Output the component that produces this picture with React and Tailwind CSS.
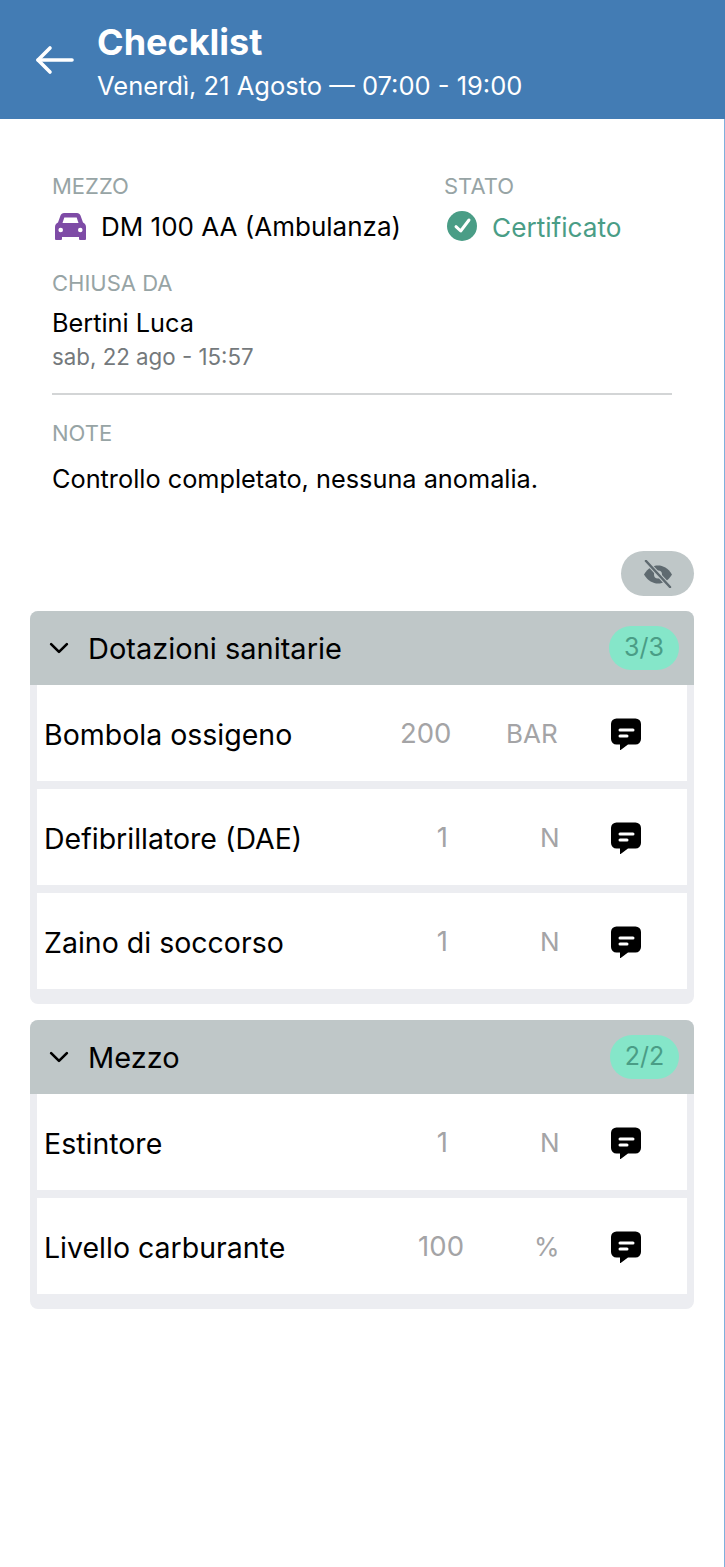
import { IoChevronDown } from 'react-icons/io5';

const sections = [
  {
    title: 'Dotazioni sanitarie',
    count: '3/3',
    badge: 'w-[70px]',
    items: [
      { name: 'Bombola ossigeno', value: '200', unit: 'BAR', valueClass: 'w-[50px] ml-auto mr-[56px]', unitClass: 'w-[52px]' },
      { name: 'Defibrillatore (DAE)', value: '1', unit: 'N', valueClass: 'w-[14px] ml-auto mr-[92px]', unitClass: 'w-[18px]' },
      { name: 'Zaino di soccorso', value: '1', unit: 'N', valueClass: 'w-[14px] ml-auto mr-[92px]', unitClass: 'w-[18px]' }
    ]
  },
  {
    title: 'Mezzo',
    count: '2/2',
    badge: 'w-[69px]',
    items: [
      { name: 'Estintore', value: '1', unit: 'N', valueClass: 'w-[14px] ml-auto mr-[92px]', unitClass: 'w-[18px]' },
      { name: 'Livello carburante', value: '100', unit: '%', valueClass: 'w-[50px] ml-auto mr-[70px]', unitClass: 'w-[24px]' }
    ]
  }
];

function BackArrow() {
  return (
    <svg width="40" height="30" viewBox="0 0 40 30" className="shrink-0" fill="none" stroke="#fff" strokeWidth="3.6" strokeLinecap="round" strokeLinejoin="round">
      <path d="M3 15h34" />
      <path d="M15 3 3 15l12 12" />
    </svg>
  );
}

function CarIcon() {
  return (
    <svg width="31" height="27" viewBox="0 0 31 27" className="shrink-0 ml-[3px]">
      <path d="M9 0h13c1.600 0 2.900.9 3.500 2.400L28 9.500c1.800.9 3 2.500 3 4.500v12a1 1 0 0 1-1 1h-5a1 1 0 0 1-1-1v-2H7v2a1 1 0 0 1-1 1H1a1 1 0 0 1-1-1V14c0-2 1.200-3.600 3-4.500l2.500-7.100C6.100.9 7.400 0 9 0z" fill="#7e4ba6" />
      <path d="M9.300 4.500h12.400l1.800 5.500H7.500z" fill="#fff" />
      <circle cx="5.700" cy="17" r="2.300" fill="#fff" />
      <circle cx="25.300" cy="17" r="2.300" fill="#fff" />
    </svg>
  );
}

function CheckIcon() {
  return (
    <svg width="30" height="30" viewBox="0 0 30 30" className="shrink-0 ml-[3px]">
      <circle cx="15" cy="15" r="15" fill="#4a9d86" />
      <path d="M9 15.700l4.700 4.300L22 9" fill="none" stroke="#fff" strokeWidth="3" strokeLinecap="round" strokeLinejoin="round" />
    </svg>
  );
}

function EyeOffIcon() {
  return (
    <svg width="28" height="28" viewBox="0 0 28 28">
      <path d="M0 14.500C4 8 9 5.500 14 5.500S24 8 28 14.500C24 21 19 23.500 14 23.500S4 21 0 14.500z" fill="#5f6a70" />
      <circle cx="14" cy="14.500" r="4" fill="#bfc7c8" />
      <path d="M2 1l24 26" stroke="#bfc7c8" strokeWidth="4.500" />
      <path d="M2 1l24 26" stroke="#5f6a70" strokeWidth="2.500" strokeLinecap="round" />
    </svg>
  );
}

function NoteIcon() {
  return (
    <svg width="32" height="33" viewBox="0 0 32 33" className="shrink-0">
      <path d="M6.500 1.500h19A5.500 5.500 0 0 1 31 7v15a5.500 5.500 0 0 1-5.500 5.500H18L10 33.500v-6H6.500A5.500 5.500 0 0 1 1 22V7a5.500 5.500 0 0 1 5.500-5.500z" fill="#000" />
      <rect x="8.500" y="11.500" width="16" height="3" rx="1.500" fill="#fff" />
      <rect x="8.500" y="17.500" width="10" height="3" rx="1.500" fill="#fff" />
    </svg>
  );
}

function Row({ item }) {
  return (
    <div className="flex items-center h-[96px] bg-white pl-[7px] pr-[45px]">
      <span className="text-[28.5px] pt-[4px] text-black whitespace-nowrap">{item.name}</span>
      <span className={`text-[27.5px] pt-[2px] text-[#a4a4a6] text-right shrink-0 ${item.valueClass}`}>{item.value}</span>
      <span className={`text-[26px] text-[#a4a4a6] shrink-0 mr-[52px] ${item.unitClass}`}>{item.unit}</span>
      <NoteIcon />
    </div>
  );
}

function Section({ section }) {
  return (
    <div className="rounded-lg bg-[#ecedf1] overflow-hidden pb-[15px]">
      <div className="flex items-center h-[74px] bg-[#bfc7c8] pl-[15px] pr-[15px]">
        <IoChevronDown className="text-[28px] text-black shrink-0" />
        <span className="ml-[15px] pt-px text-[29px] text-black">{section.title}</span>
        <span className={`ml-auto flex items-center justify-center h-[44px] rounded-full bg-[#85e6c9] text-[25px] text-[#4a9d86] ${section.badge}`}>
          {section.count}
        </span>
      </div>
      <div className="flex flex-col gap-2 px-[7px]">
        {section.items.map((item) => (
          <Row key={item.name} item={item} />
        ))}
      </div>
    </div>
  );
}

export default function App() {
  return (
    <div className="min-h-[1567px] bg-white border-r border-[#7fb0dc] font-['Inter',sans-serif] text-black">
      <div className="flex items-center h-[119px] bg-[#437cb4] pl-[35px] -mr-px">
        <BackArrow />
        <div className="ml-[22px] pt-[2px]">
          <div className="text-[36px] leading-[44px] font-bold text-white">Checklist</div>
          <div className="text-[25.5px] leading-[32px] text-white mt-[6px]">Venerdì, 21 Agosto — 07:00 - 19:00</div>
        </div>
      </div>

      <div className="px-[52px] pt-[55px]">
        <div className="flex">
          <div className="w-[392px]">
            <div className="text-[22px] leading-[24px] text-[#97a4a5]">MEZZO</div>
            <div className="flex items-center mt-[10px] h-[36px]">
              <CarIcon />
              <span className="ml-[15px] text-[26px] text-black whitespace-nowrap">DM 100 AA (Ambulanza)</span>
            </div>
          </div>
          <div>
            <div className="text-[22px] leading-[24px] text-[#97a4a5]">STATO</div>
            <div className="flex items-center mt-[10px] h-[36px]">
              <CheckIcon />
              <span className="ml-[15px] pt-[3px] text-[26.2px] text-[#4a9d86]">Certificato</span>
            </div>
          </div>
        </div>

        <div className="mt-[27px] text-[22px] leading-[24px] text-[#97a4a5]">CHIUSA DA</div>
        <div className="mt-[12px] text-[25.3px] leading-[32px] text-black">Bertini Luca</div>
        <div className="mt-[4px] text-[22.3px] leading-[28px] text-[#74797c]">sab, 22 ago - 15:57</div>
        <div className="mt-[22px] border-t-2 border-[#d3d5d6]"></div>
        <div className="mt-[26px] text-[22px] leading-[24px] text-[#97a4a5]">NOTE</div>
        <div className="mt-[18px] text-[25.3px] leading-[32px] text-black">Controllo completato, nessuna anomalia.</div>
      </div>

      <div className="px-[30px]">
        <div className="flex justify-end mt-[56px]">
          <div className="flex items-center justify-center w-[73px] h-[45px] rounded-full bg-[#bfc7c8]">
            <EyeOffIcon />
          </div>
        </div>
        <div className="flex flex-col gap-[16px] mt-[15px]">
          {sections.map((section) => (
            <Section key={section.title} section={section} />
          ))}
        </div>
      </div>
    </div>
  );
}
